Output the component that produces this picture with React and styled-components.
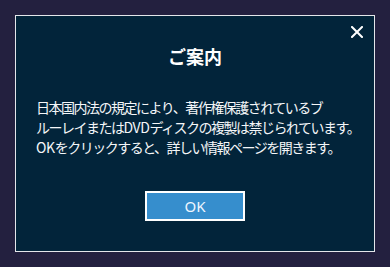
import React from "react";
import styled, { createGlobalStyle } from "styled-components";

const Global = createGlobalStyle`
  html, body { margin: 0; padding: 0; background: #23203f; }
  body { font-family: "Noto Sans CJK JP", "Noto Sans", sans-serif; }
`;

const Page = styled.div`
  width: 390px;
  height: 267px;
  padding: 15px;
  box-sizing: border-box;
  background: #23203f;
`;

const Dialog = styled.div`
  position: relative;
  box-sizing: border-box;
  height: 237px;
  border: 1px solid #e4e6ea;
  background: #02243a;
  display: flex;
  flex-direction: column;
  align-items: center;
  padding-top: 28px;
`;

const Close = styled.button`
  position: absolute;
  top: 8px;
  right: 9px;
  width: 16px;
  height: 16px;
  padding: 0;
  border: 0;
  background: transparent;
  display: flex;
  align-items: center;
  justify-content: center;
  cursor: pointer;
`;

const Title = styled.h1`
  margin: 0;
  font-size: 18px;
  line-height: 24px;
  font-weight: 700;
  color: #ffffff;
`;

const Message = styled.p`
  margin: 29px 0 0;
  align-self: stretch;
  padding-left: 20px;
  font-size: 14px;
  line-height: 20px;
  color: #f4f6f8;
  white-space: nowrap;
  letter-spacing: -1.5px;
`;

const Latin = styled.span`
  letter-spacing: -0.4px;
`;

const OkButton = styled.button`
  margin-top: 34px;
  width: 100px;
  height: 30px;
  box-sizing: border-box;
  border: 2px solid #ffffff;
  background: #368ecd;
  color: #eef6ff;
  font-family: "Noto Sans", "Noto Sans CJK JP", sans-serif;
  font-size: 15px;
  line-height: 26px;
  padding: 0;
  cursor: pointer;
`;

export default function App() {
  return (
    <>
      <Global />
      <Page>
        <Dialog>
          <Close aria-label="閉じる">
            <svg width="12" height="12" viewBox="0 0 12 12">
              <path d="M1 1 L11 11 M11 1 L1 11" stroke="#ffffff" strokeWidth="2" strokeLinecap="square" />
            </svg>
          </Close>
          <Title>ご案内</Title>
          <Message>
            日本国内法の規定により、著作権保護されているブ
            <br />
            ルーレイまたは<Latin>DVD</Latin>ディスクの複製は禁じられています。
            <br />
            <Latin>OK</Latin>をクリックすると、詳しい情報ページを開きます。
          </Message>
          <OkButton>OK</OkButton>
        </Dialog>
      </Page>
    </>
  );
}
